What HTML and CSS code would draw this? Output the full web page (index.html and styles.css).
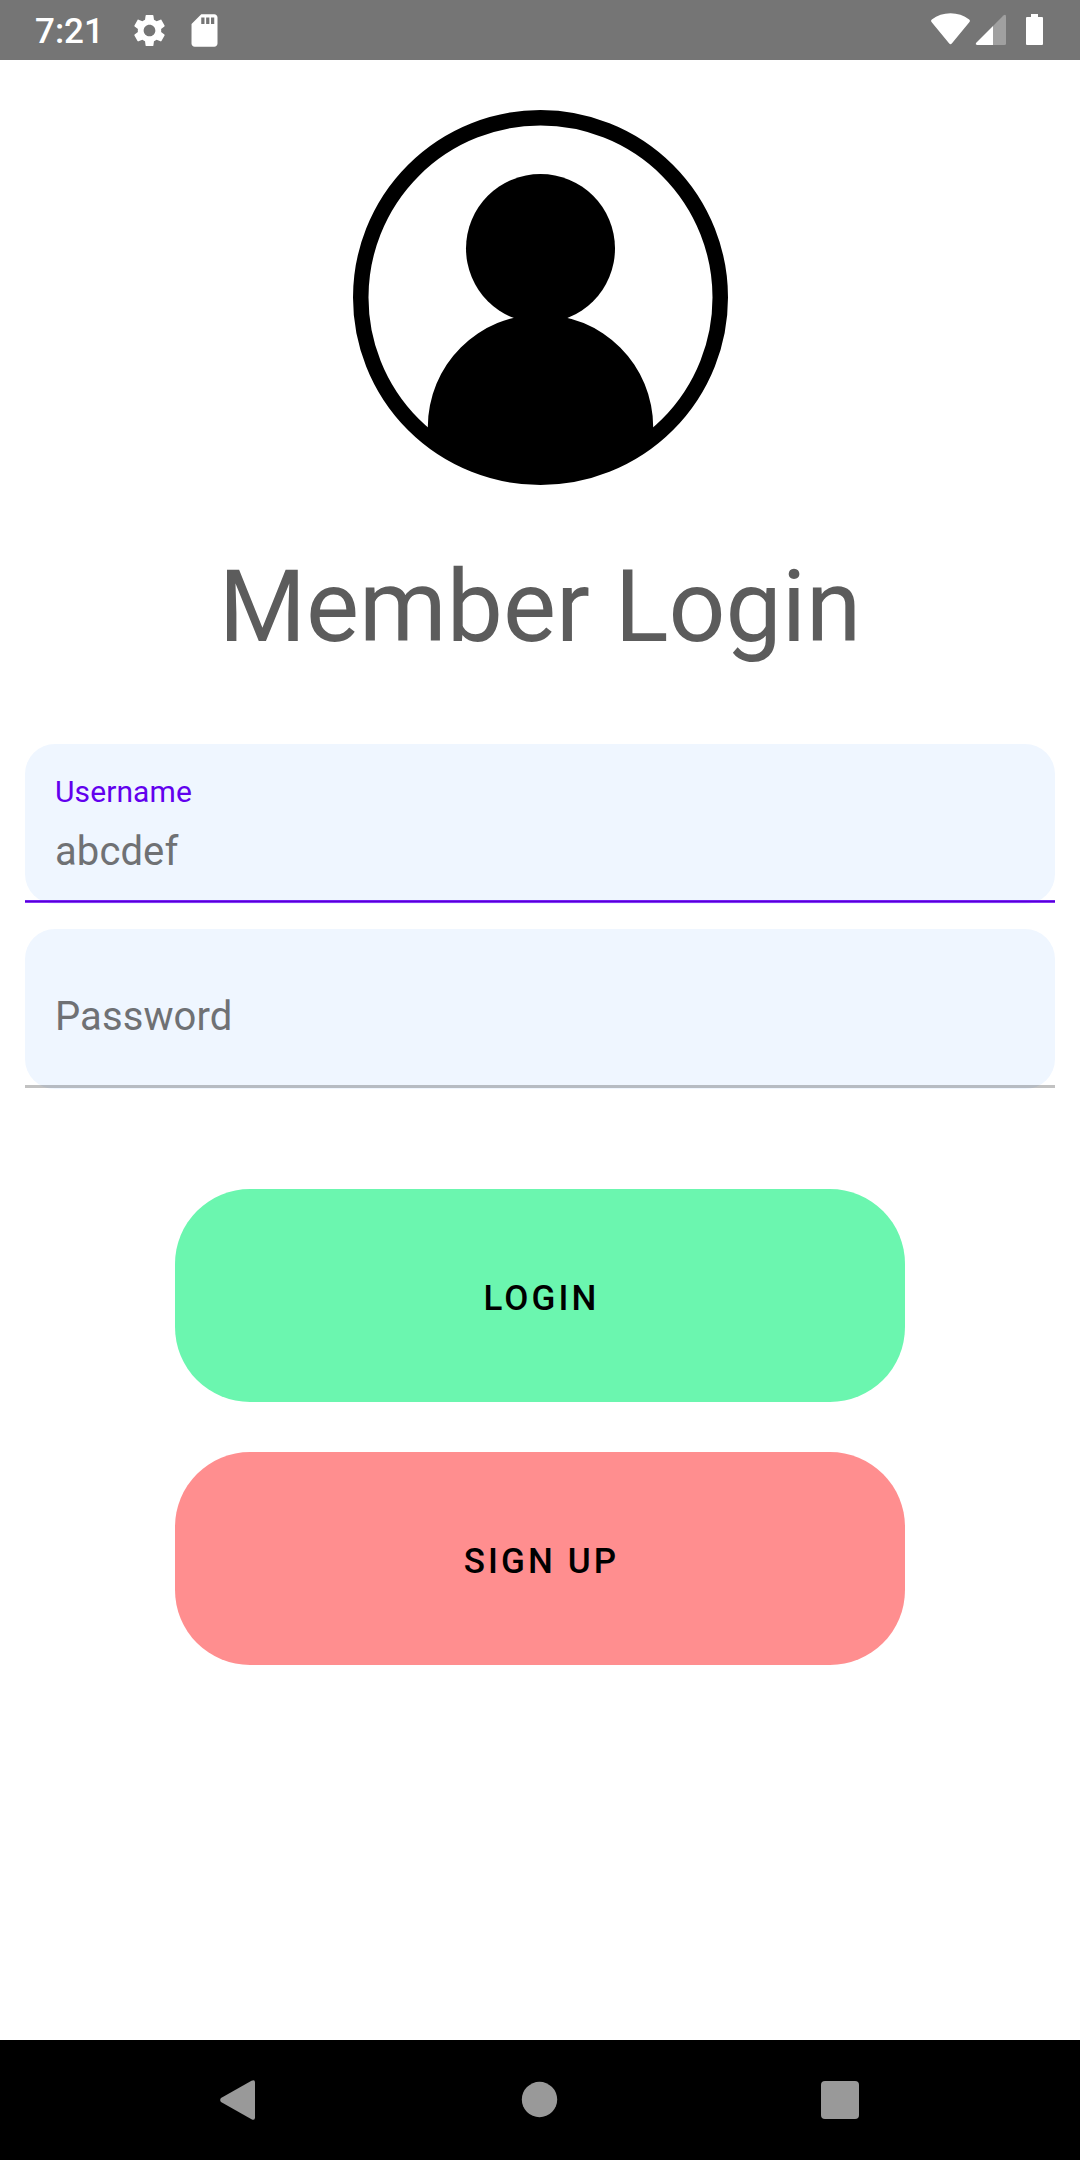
FILE: index.html
```html
<!DOCTYPE html>
<html lang="en">
<head>
<meta charset="utf-8">
<title>Member Login</title>
<link rel="stylesheet" href="styles.css">
</head>
<body>
<div class="screen">
  <header class="status">
    <span class="clock">7:21</span>
    <svg class="gear" viewBox="0 0 24 24"><path d="M19.14 12.94c.04-.3.06-.61.06-.94 0-.32-.02-.64-.07-.94l2.03-1.58c.18-.14.23-.41.12-.61l-1.92-3.32c-.12-.22-.37-.29-.59-.22l-2.39.96c-.5-.38-1.03-.7-1.62-.94l-.36-2.54c-.04-.24-.24-.41-.48-.41h-3.84c-.24 0-.43.17-.47.41l-.36 2.54c-.59.24-1.13.57-1.62.94l-2.39-.96c-.22-.08-.47 0-.59.22L2.74 8.87c-.12.21-.08.47.12.61l2.03 1.58c-.05.3-.09.63-.09.94s.02.64.07.94l-2.03 1.58c-.18.14-.23.41-.12.61l1.92 3.32c.12.22.37.29.59.22l2.39-.96c.5.38 1.03.7 1.62.94l.36 2.54c.05.24.24.41.48.41h3.84c.24 0 .44-.17.47-.41l.36-2.54c.59-.24 1.13-.56 1.62-.94l2.39.96c.22.08.47 0 .59-.22l1.92-3.32c.12-.22.07-.47-.12-.61l-2.01-1.58zM12 15.6c-1.98 0-3.6-1.62-3.6-3.6s1.62-3.6 3.6-3.6 3.6 1.62 3.6 3.6-1.62 3.6-3.6 3.6z"/></svg>
    <svg class="sdcard" viewBox="0 0 24 24"><path d="M18 2h-8L4.02 8 4 20c0 1.1.9 2 2 2h12c1.1 0 2-.9 2-2V4c0-1.1-.9-2-2-2zm-6 6h-2V4h2v4zm3 0h-2V4h2v4zm3 0h-2V4h2v4z"/></svg>
    <svg class="radios" viewBox="0 0 120 60">
      <path d="M20.500 44.200Q19.800 44.200 19 43.200L1.300 21.800Q.6 20.600 1.800 19.600Q10 13.200 20.500 13.200T39.200 19.600Q40.400 20.600 39.700 21.800L22 43.200Q21.200 44.200 20.500 44.200Z"/>
      <path class="faint" d="M63 26L73.400 15.400Q76 13.600 76 16.500V43.500Q76 45 74.500 45H63Z"/>
      <path d="M63 26V45H47Q45 44.600 46 43Z"/>
      <path d="M101 14h7v3h4q1 0 1 1v26q0 1-1 1H97q-1 0-1-1V18q0-1 1-1h4z"/>
    </svg>
  </header>
  <main class="login">
    <svg class="avatar" viewBox="0 0 375 375">
      <circle class="ring" cx="187.500" cy="187.500" r="179.750"/>
      <circle cx="187.500" cy="138.500" r="74.500"/>
      <path d="M74.800 320V317.200A112.700 112.700 0 0 1 300.200 317.200V320A174 174 0 0 1 187.500 368A174 174 0 0 1 74.800 320Z"/>
    </svg>
    <h1 class="title">Member Login</h1>
    <div class="field focused">
      <span class="label">Username</span>
      <span class="value">abcdef</span>
    </div>
    <div class="field">
      <span class="value">Password</span>
    </div>
    <button class="action primary" type="button">LOGIN</button>
    <button class="action secondary" type="button">SIGN UP</button>
  </main>
  <nav class="navbar">
    <svg viewBox="0 0 40 40"><path d="M2 18L32.500 .8Q36 -.8 36 2.500V37.500Q36 40.800 32.500 39.200L2 22Q.4 20 2 18Z"/></svg>
    <svg viewBox="0 0 40 40"><circle cx="19.500" cy="19.500" r="17.700"/></svg>
    <svg viewBox="0 0 40 40"><rect x="1" y="1" width="38" height="38" rx="4"/></svg>
  </nav>
</div>
</body>
</html>
```
FILE: styles.css
```css
body {
  margin: 0;
  background: #fff;
  font-family: Roboto, sans-serif;
}

.screen {
  display: flex;
  flex-direction: column;
  width: 1080px;
  height: 2160px;
}

.status {
  display: flex;
  align-items: center;
  box-sizing: border-box;
  height: 60px;
  padding: 0 30px 0 35px;
  background: #757575;
  color: #fff;
}

.status svg {
  flex: none;
  fill: #fff;
}

.clock {
  width: 95px;
  padding-top: 3px;
  font-size: 35px;
  font-weight: 500;
  line-height: 60px;
}

.gear {
  width: 39px;
  height: 39px;
}

.sdcard {
  width: 39px;
  height: 39px;
  margin-left: 16px;
}

.radios {
  width: 120px;
  height: 60px;
  margin-left: auto;
}

.status .faint {
  fill: #a0a0a0;
}

.login {
  display: flex;
  flex: 1;
  flex-direction: column;
  align-items: center;
  padding: 50px 25px 0;
}

.avatar {
  width: 375px;
  height: 375px;
  margin-left: 1px;
}

.ring {
  fill: none;
  stroke: #000;
  stroke-width: 15.5px;
}

.title {
  margin: 63px 0 78px;
  color: #5c5c5c;
  font-size: 100px;
  font-weight: 400;
  line-height: 118px;
}

.field {
  position: relative;
  display: flex;
  flex-direction: column;
  justify-content: center;
  align-self: stretch;
  box-sizing: border-box;
  height: 160px;
  margin-bottom: 25px;
  padding: 16px 30px 0;
  border-radius: 30px;
  background: #eff6ff;
  color: #6f7174;
}

.field::after {
  position: absolute;
  right: 0;
  bottom: 1px;
  left: 0;
  height: 3px;
  background: rgba(0, 0, 0, 0.24);
  content: "";
}

.field.focused {
  justify-content: flex-start;
  padding-top: 28px;
}

.focused::after {
  background: linear-gradient(#7520f4 1px, #5600d4 1px, #5600d4 2px, #8535f6 2px);
}

.label {
  color: #6200ee;
  font-size: 30px;
  line-height: 40px;
  letter-spacing: 0.1px;
}

.value {
  font-size: 40px;
  line-height: 48px;
  letter-spacing: 0.1px;
}

.focused .value {
  margin-top: 16px;
}

.action {
  width: 730px;
  height: 213px;
  margin: 0 0 50px;
  padding: 6px 0 0 3px;
  border: 0;
  border-radius: 75px;
  color: #000;
  font: 500 35px Roboto, sans-serif;
  letter-spacing: 3.125px;
}

.primary {
  margin-top: 75px;
  background: #6bf6af;
}

.secondary {
  background: #ff8e8f;
}

.navbar {
  display: flex;
  align-items: center;
  justify-content: space-between;
  box-sizing: border-box;
  height: 120px;
  padding: 0 220px 0 219px;
  background: #000;
}

.navbar svg {
  width: 40px;
  height: 40px;
  fill: #999;
}
```
